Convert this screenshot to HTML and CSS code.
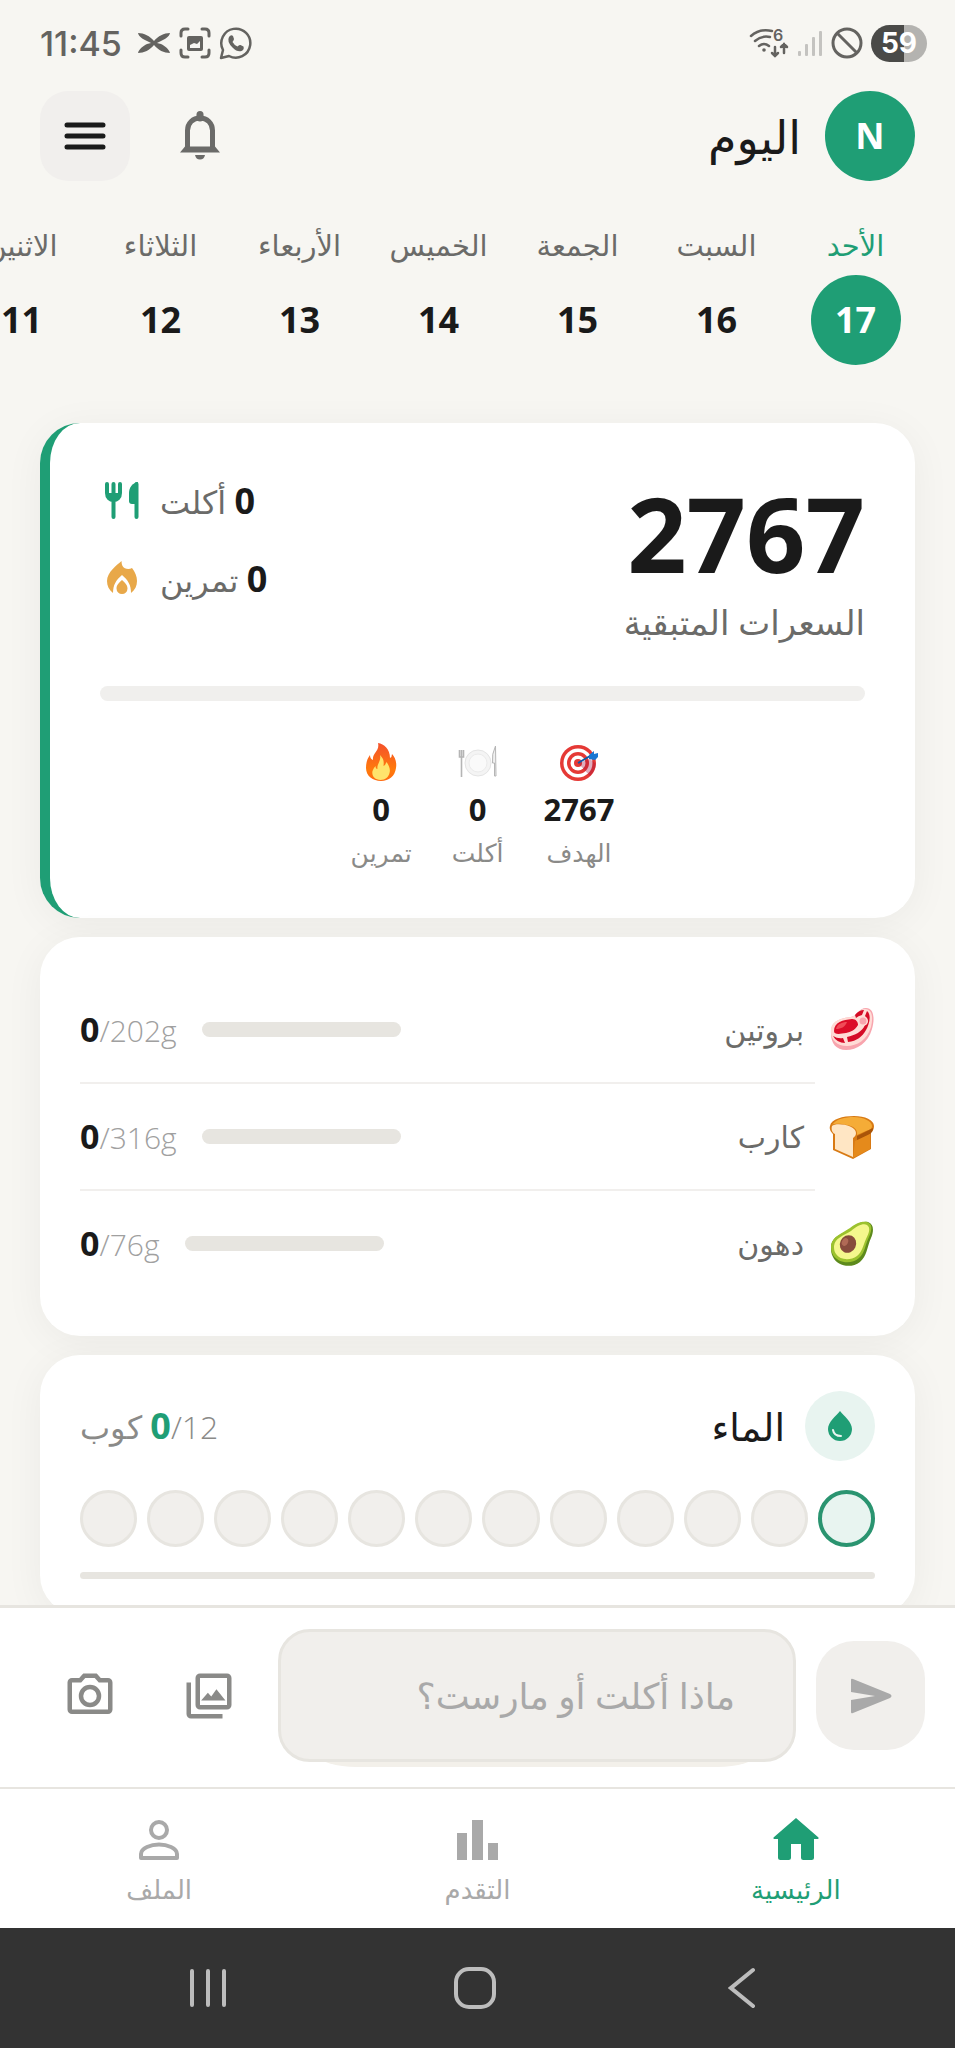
FILE: index.html
```html
<!DOCTYPE html>
<html lang="ar" dir="rtl">
<head>
  <meta charset="UTF-8">
  <meta name="viewport" content="width=device-width, initial-scale=1.0">
  <title>اليوم</title>
  <link rel="stylesheet" href="styles.css">
</head>
<body>
  <div class="status-bar" dir="ltr">
    <div class="status-left">
      <span class="clock">11:45</span>
      <svg width="34" height="34" viewBox="0 0 34 34" fill="#646360"><path d="M1 7c6 0 12 3 16 8 4-5 10-8 16-8-1 4-5 6-9 8l-4 2 4 1c4 2 8 5 9 9-6 0-12-3-16-8-4 5-10 8-16 8 1-4 5-7 9-9l4-1-4-2C6 13 2 11 1 7z"/></svg>
      <svg width="32" height="32" viewBox="0 0 32 32" fill="none" stroke="#646360" stroke-width="3" stroke-linecap="round"><path d="M2 9V6q0-4 4-4h3M23 2h3q4 0 4 4v3M30 23v3q0 4-4 4h-3M9 30H6q-4 0-4-4v-3"/><rect x="8" y="9" width="16" height="15" rx="2" fill="#646360" stroke="none"/><path d="M11 21v-3l4-2 3 1 3-3v7z" fill="#f7f6f2" stroke="none"/></svg>
      <svg width="34" height="34" viewBox="0 0 34 34"><path d="M2 32l2-8A14.500 14.500 0 1 1 10 30z" fill="none" stroke="#646360" stroke-width="2.500" stroke-linejoin="round"/><path d="M10 11q2-3 4-1l1 3q0 1-1.500 3 2 3.500 5 4.500 1.500-2 3-1.500l3 1.500q1 3-2 4.500-4 1.500-9-3.500-6-6-3.500-10.500z" fill="#646360"/></svg>
    </div>
    <div class="status-right">
      <svg width="40" height="36" viewBox="0 -2 40 36" fill="none" stroke="#646360" stroke-width="2.500" stroke-linecap="round"><path d="M2 9Q11 1 23 4M6 14q7-6 15-4M10 19q5-4 10 0"/><circle cx="15" cy="23" r="1.800" fill="#646360" stroke="none"/><path d="M26 20v9m-3-3l3 3 3-3M35 26v-9m-3 3l3-3 3 3"/><text x="24" y="14" class="wifi-gen">6</text></svg>
      <svg width="26" height="28" viewBox="0 0 26 28" fill="#c4c3c0"><rect x="1" y="22" width="3" height="5" rx="1"/><rect x="8" y="15" width="3" height="12" rx="1"/><rect x="15" y="8" width="3" height="19" rx="1"/><rect x="22" y="2" width="3" height="25" rx="1"/></svg>
      <svg width="32" height="32" viewBox="0 0 32 32" fill="none" stroke="#646360" stroke-width="3"><circle cx="16" cy="16" r="14"/><path d="M6 6l20 20"/></svg>
      <span class="battery">59</span>
    </div>
  </div>

  <header class="header">
    <div class="avatar">N</div>
    <h1>اليوم</h1>
    <button class="bell" aria-label="الإشعارات">
      <svg width="42" height="50" viewBox="0 0 42 50" fill="none" stroke="#6b6b69" stroke-width="5"><path d="M8.500 39V19.500C8.500 12 14 7 21 7s12.500 5 12.500 12.500V39" /><path d="M1 41.500l5-6h30l5 6z" fill="#6b6b69" stroke="none"/><path d="M21 3.500V7" stroke-width="7" stroke-linecap="round"/><path d="M16 44h10q-1 4.500-5 4.500T16 44z" fill="#6b6b69" stroke="none"/></svg>
    </button>
    <button class="menu" aria-label="القائمة">
      <svg width="42" height="30" viewBox="0 0 42 30" stroke="#1a1a1a" stroke-width="5" stroke-linecap="round"><path d="M3 4h36M3 15h36M3 26h36"/></svg>
    </button>
  </header>

  <nav class="days">
    <button class="day active"><span class="day-name">الأحد</span><span class="day-number">17</span></button>
    <button class="day"><span class="day-name">السبت</span><span class="day-number">16</span></button>
    <button class="day"><span class="day-name">الجمعة</span><span class="day-number">15</span></button>
    <button class="day"><span class="day-name">الخميس</span><span class="day-number">14</span></button>
    <button class="day"><span class="day-name">الأربعاء</span><span class="day-number">13</span></button>
    <button class="day"><span class="day-name">الثلاثاء</span><span class="day-number">12</span></button>
    <button class="day"><span class="day-name">الاثنين</span><span class="day-number">11</span></button>
  </nav>

  <main class="content">
    <section class="card calories">
      <div class="calories-top">
        <div>
          <div class="calories-value">2767</div>
          <div class="calories-label">السعرات المتبقية</div>
        </div>
        <div class="summary">
          <div class="summary-row">
            <span><b>0</b> أكلت</span>
            <svg width="44" height="44" viewBox="-4 -3 44 44" fill="none" stroke="#1f9e75" stroke-width="4" stroke-linecap="round"><path d="M3 2v9c0 5 3 7 6.500 7S16 16 16 11V2M9.500 2v33M32.500 2v33"/><path d="M4 11h11l-1 6H6z" fill="#1f9e75" stroke="none"/><path d="M34 0c-6 1-9 6-9 11v8q0 3 3 3h6z" fill="#1f9e75" stroke="none"/></svg>
          </div>
          <div class="summary-row">
            <span><b>0</b> تمرين</span>
            <svg width="44" height="44" viewBox="-7 -4 44 44" fill="#e8a849"><path d="M14.500 0C10 4 0 11 0 20c0 5 2 9 6 12 0-8 3-13 9-18 6 5 9 10 9 18 4-3 6-7 6-12 0-5-2-9-5-13-3 2-8 1-9.500-2Q14.500 3 14.500 0z"/><path d="M15 19c-3 3-5.500 5-5.500 8.500a5.500 5.500 0 0 0 11 0C20.500 24 18 22 15 19z"/></svg>
          </div>
        </div>
      </div>
      <div class="progress"></div>
      <div class="stats">
        <div class="stat">
          <svg width="40" height="40" viewBox="0 0 40 40"><circle cx="19" cy="21" r="18" fill="#e53935"/><circle cx="19" cy="21" r="14.500" fill="#fff"/><circle cx="19" cy="21" r="11" fill="#e53935"/><circle cx="19" cy="21" r="7.500" fill="#fff"/><circle cx="19" cy="21" r="4" fill="#e53935"/><path d="M19 21l12 13q5-5 6-12l-6-5z" fill="#a01040" opacity=".35"/><path d="M19 21l12-7" stroke="#0d5aa7" stroke-width="2"/><path d="M30 13l5-4v3l4-1v4l-3 3-6-1z" fill="#1976d2"/></svg>
          <b>2767</b>
          <span>الهدف</span>
        </div>
        <div class="stat">
          <svg width="40" height="40" viewBox="0 0 40 40" fill="none"><circle cx="20" cy="21" r="13" fill="#f4f4f4" stroke="#e4e4e4"/><circle cx="20" cy="21" r="9" fill="#fafafa" stroke="#ebebeb"/><path d="M1.500 8v7h4V8M3.500 8v27" stroke="#b5b5b5" stroke-width="1.600"/><path d="M37.500 4q-4 8-3 17h2v13h1.500z" fill="#f0f0f0" stroke="#b5b5b5"/></svg>
          <b>0</b>
          <span>أكلت</span>
        </div>
        <div class="stat">
          <svg width="40" height="40" viewBox="-5 0 40 40"><defs><linearGradient id="fire" x1="0" y1="0" x2="0" y2="1"><stop offset="0" stop-color="#f4512c"/><stop offset=".7" stop-color="#ff7a0c"/><stop offset="1" stop-color="#ff6a10"/></linearGradient></defs><path d="M12 1c6 1 12 6 12 15q2-1 2-4c3 3 5 8 4 14-1 8-7 13-15 13S0 34 0 26c0-5 1-9 4-13q0 4 3 5C6 11 14 9 12 1z" fill="url(#fire)"/><path d="M14 13c4 4 4 7 3.500 11q2-1 3-4c3 4 4 8 3 11-1 4-4 7-9 7-6 0-9-4-8-9q1-3 3-5 0 3 2 3c-1-5 4-8 2.500-14z" fill="#ffe36c"/></svg>
          <b>0</b>
          <span>تمرين</span>
        </div>
      </div>
    </section>

    <section class="card macros">
      <div class="macro">
        <svg width="46" height="46" viewBox="0 0 46 46"><path d="M2 27C1 14 12 11 22 10c6-1 8-9 15-9 8 0 9 11 6 21-4 14-15 21-26 21C7 43 2 36 2 27z" fill="#f8a5ae"/><path d="M2 25C1 14 12 11 22 10c6-1 8-8 14-8 8 0 8 10 6 18-4 13-14 19-24 19C8 39 2 33 2 25z" fill="#ffdcd6"/><path d="M5 24c0-9 9-11 18-12 4 0 6 3 6 6-3 5-7 7-12 8-6 1-12 2-12-2z" fill="#dc0d28"/><path d="M7 22c1-5 6-7 11-7-2 5-6 7-11 7z" fill="#f04b57"/><path d="M26 8q4-5 9-5l-2 5q-4 1-6 3zM38 4c5 4 2 14-1 19-4 7-9 11-18 12l-1-5c8-2 15-5 18-12 2-1 3-3 2-5l-2-4zM4 29q5 3 10 2l2 5Q8 36 4 29z" fill="#d50b26"/><circle cx="34" cy="14" r="5" fill="#ffdcd6"/><circle cx="34" cy="14" r="3.500" fill="#f8a5ae"/></svg>
        <span class="macro-name">بروتين</span>
        <span class="macro-bar"></span>
        <span class="macro-value" dir="ltr"><b>0</b>/202g</span>
      </div>
      <hr>
      <div class="macro">
        <svg width="46" height="46" viewBox="0 0 46 46"><path d="M1 12C2 5 14 2 25 2c11 0 20 4 20 10 0 3-1 5-3 6v17L24 45 4 36V20C2 18 0 15 1 12z" fill="#d87a14"/><path d="M3 11C7 5 16 3 25 3s18 4 18 9c0 3-3 4-6 5l-9 4c1-6-4-9-10-10S7 9 3 11z" fill="#f5ac37"/><path d="M28 22l16-8c0 3-1 4-3 6l-13 7z" fill="#a95408"/><path d="M26 27l15-7v15L24 44z" fill="#e58a1b"/><path d="M3 12c4-4 24-1 24 7 0 3-2 4-3 5v19L6 35V20c-3-1-4-5-3-8z" fill="#ffe6c4"/></svg>
        <span class="macro-name">كارب</span>
        <span class="macro-bar"></span>
        <span class="macro-value" dir="ltr"><b>0</b>/316g</span>
      </div>
      <hr>
      <div class="macro">
        <svg width="46" height="46" viewBox="0 0 46 46"><path d="M2 26C3 15 12 14 21 8c5-4 11-8 18-7 6 2 6 9 3 16-4 9-4 18-11 24-9 7-23 4-27-5-2-3-2-7-2-10z" fill="#5d8a1c"/><path d="M2 24C4 15 12 13 21 7c5-4 11-7 17-6 6 2 5 8 2 15-4 8-4 16-10 21-8 7-21 5-26-3-2-3-2-7-2-10z" fill="#9cc22e"/><path d="M5 25c1-8 9-10 17-15C28 5 34 2 38 4c4 3 2 8-1 14-3 7-4 13-9 17-7 5-17 4-21-2-2-3-2-5-2-8z" fill="#f4f78d"/><ellipse cx="19" cy="23" rx="8" ry="9" transform="rotate(25 19 23)" fill="#874b3c"/><ellipse cx="16" cy="21" rx="3" ry="4" transform="rotate(25 16 21)" fill="#b06a56"/></svg>
        <span class="macro-name">دهون</span>
        <span class="macro-bar"></span>
        <span class="macro-value" dir="ltr"><b>0</b>/76g</span>
      </div>
    </section>

    <section class="card water">
      <div class="water-head">
        <span class="water-icon"><svg width="24" height="30" viewBox="0 0 24 30"><path d="M12 0C8 5 0 11 0 18a12 12 0 0 0 24 0C24 11 16 5 12 0z" fill="#1f9e75"/><path d="M5 19q1 6 8 6" fill="none" stroke="#e8f4f0" stroke-width="2" stroke-linecap="round"/></svg></span>
        <h2>الماء</h2>
        <span class="water-count"><b>0</b>/12 كوب</span>
      </div>
      <div class="cups">
        <button class="cup next" aria-label="1"></button>
        <button class="cup" aria-label="2"></button>
        <button class="cup" aria-label="3"></button>
        <button class="cup" aria-label="4"></button>
        <button class="cup" aria-label="5"></button>
        <button class="cup" aria-label="6"></button>
        <button class="cup" aria-label="7"></button>
        <button class="cup" aria-label="8"></button>
        <button class="cup" aria-label="9"></button>
        <button class="cup" aria-label="10"></button>
        <button class="cup" aria-label="11"></button>
        <button class="cup" aria-label="12"></button>
      </div>
      <div class="water-bar"></div>
    </section>
  </main>

  <form class="composer">
    <button type="button" class="send" aria-label="إرسال">
      <svg width="42" height="36" viewBox="0 0 42 36" fill="#a9a9a9"><path d="M1 2q0-2 2-1l37 15q3 2 0 4L3 35q-2 1-2-1V22l24-4L1 14z"/></svg>
    </button>
    <div class="field">
      <input type="text" aria-label="ماذا أكلت أو مارست؟" placeholder="ماذا أكلت أو مارست؟">
    </div>
    <button type="button" class="tool" aria-label="الصور">
      <svg width="54" height="54" viewBox="0 0 24 24" fill="#8a8a88"><path d="M20 4v12H8V4h12m0-2H8a2 2 0 0 0-2 2v12a2 2 0 0 0 2 2h12a2 2 0 0 0 2-2V4a2 2 0 0 0-2-2zM8.500 14l3-3.500 1.500 1.700L15.300 9l4 5zM2 6v14a2 2 0 0 0 2 2h14v-2H4V6z"/></svg>
    </button>
    <button type="button" class="tool" aria-label="الكاميرا">
      <svg width="54" height="54" viewBox="0 0 24 24" fill="#8a8a88"><path d="M14.100 4l1.800 2H20v12H4V6h4.100l1.800-2h4.200M15 2H9L7.200 4H4a2 2 0 0 0-2 2v12a2 2 0 0 0 2 2h16a2 2 0 0 0 2-2V6a2 2 0 0 0-2-2h-3.200zm-3 7a3 3 0 1 1 0 6 3 3 0 0 1 0-6m0-2a5 5 0 1 0 0 10 5 5 0 0 0 0-10z"/></svg>
    </button>
  </form>

  <nav class="tabs">
    <a href="#" class="tab active">
      <svg width="46" height="42" viewBox="0 0 46 42" fill="currentColor"><path d="M23 0l22.500 19.500q.5 1.500-1 1.500H41v18.500q0 2.500-2.500 2.500h-8q-2.500 0-2.500-2.500V26H18v13.500q0 2.500-2.500 2.500h-8Q5 42 5 39.500V21H1.500q-1.500 0-1-1.500z"/></svg>
      <span>الرئيسية</span>
    </a>
    <a href="#" class="tab">
      <svg width="42" height="42" viewBox="0 0 42 42" fill="currentColor"><path d="M0 15h10v27H0zM15 2h11v40H15zM31 25h10v17H31z"/></svg>
      <span>التقدم</span>
    </a>
    <a href="#" class="tab">
      <svg width="42" height="42" viewBox="0 0 42 42" fill="none" stroke="currentColor" stroke-width="4" stroke-linejoin="round"><circle cx="21" cy="12" r="8"/><path d="M3 40h36v-4c0-6-10-9.500-18-9.500S3 30 3 36z"/></svg>
      <span>الملف</span>
    </a>
  </nav>

  <div class="system-nav" dir="ltr">
    <button aria-label="Recents"><svg width="38" height="40" viewBox="0 0 38 40" stroke="#bdbdbd" stroke-width="4" stroke-linecap="round"><path d="M3 3v34M19 3v34M35 3v34"/></svg></button>
    <button aria-label="Home"><svg width="42" height="42" viewBox="0 0 42 42" fill="none" stroke="#bdbdbd" stroke-width="4"><rect x="2" y="2" width="38" height="38" rx="13"/></svg></button>
    <button aria-label="Back"><svg width="28" height="42" viewBox="0 0 28 42" fill="none" stroke="#bdbdbd" stroke-width="4" stroke-linecap="round"><path d="M25 3L3 21l22 18"/></svg></button>
  </div>
</body>
</html>
```
FILE: styles.css
```css
* {
  box-sizing: border-box;
}
body {
  font-family: "Open Sans", "DejaVu Sans", sans-serif;
  margin: 0;
  height: 100vh;
  display: flex;
  flex-direction: column;
  overflow: hidden;
  background-color: #f7f6f2;
  color: #1a1a1a;
}
button {
  font-family: inherit;
  color: inherit;
  background: none;
  border: none;
  padding: 0;
  cursor: pointer;
  display: flex;
  justify-content: center;
  align-items: center;
}
svg {
  display: block;
  flex-shrink: 0;
}
h1, h2 {
  margin: 0;
  font-weight: 400;
}
b {
  color: #1a1a1a;
  font-weight: 700;
}

/* phone status bar */
.status-bar {
  display: flex;
  justify-content: space-between;
  align-items: center;
  height: 86px;
  padding: 0 28px 0 40px;
  flex-shrink: 0;
}
.status-left,
.status-right {
  display: flex;
  align-items: center;
  gap: 8px;
}
.clock {
  font-family: Inter, sans-serif;
  font-size: 34px;
  font-weight: 500;
  color: #646360;
  margin-right: 7px;
}
.wifi-gen {
  font-family: Inter, sans-serif;
  font-size: 16px;
  font-weight: 600;
  fill: #646360;
  stroke: none;
}
.battery {
  font-family: Inter, sans-serif;
  font-size: 28px;
  font-weight: 700;
  line-height: 37px;
  width: 56px;
  text-align: center;
  color: #fff;
  border-radius: 19px;
  background: linear-gradient(to right, #4a4a48 59%, #b4b3b0 59%);
}

.header {
  display: flex;
  align-items: center;
  height: 100px;
  padding: 0 40px;
  flex-shrink: 0;
}
.avatar {
  width: 90px;
  height: 90px;
  border-radius: 50%;
  background-color: #1f9e75;
  color: #fff;
  font-size: 36px;
  font-weight: 700;
  line-height: 90px;
  text-align: center;
}
.header h1 {
  font-size: 46px;
  line-height: 90px;
  margin-right: 24px;
}
.bell {
  width: 90px;
  height: 90px;
  margin-right: auto;
  margin-left: 25px;
}
.menu {
  width: 90px;
  height: 90px;
  border-radius: 28px;
  background-color: #f1efed;
}

.days {
  display: flex;
  gap: 20px;
  padding: 34px 40px 58px;
  overflow: hidden;
  flex-shrink: 0;
}
.day {
  width: 119px;
  flex-shrink: 0;
  flex-direction: column;
  gap: 5px;
}
.day-name {
  font-size: 29px;
  line-height: 50px;
  color: #6b6b69;
  white-space: nowrap;
}
.day-number {
  width: 90px;
  height: 90px;
  border-radius: 50%;
  font-size: 36px;
  font-weight: 700;
  line-height: 90px;
}
.day.active .day-name {
  color: #1f9e75;
}
.day.active .day-number {
  background-color: #1f9e75;
  color: #fff;
}

.content {
  flex: 1;
  min-height: 0;
  display: flex;
  flex-direction: column;
  gap: 19px;
  padding: 0 40px;
}
.card {
  background-color: #fff;
  border-radius: 40px;
  box-shadow: 0 6px 40px rgba(0, 0, 0, 0.05);
  flex-shrink: 0;
}

.calories {
  border-left: 10px solid #1f9e75;
  padding: 50px;
}
.calories-top {
  display: flex;
  justify-content: space-between;
}
.calories-value {
  font-size: 104px;
  font-weight: 700;
  line-height: 120px;
}
.calories-label {
  font-size: 34px;
  line-height: 58px;
  color: #6b6b69;
}
.summary {
  display: flex;
  flex-direction: column;
  gap: 22px;
}
.summary-row {
  display: flex;
  justify-content: flex-end;
  align-items: center;
  gap: 16px;
  height: 56px;
  font-size: 32px;
  line-height: 56px;
  color: #6b6b69;
}
.summary-row b {
  font-size: 36px;
}
.progress {
  height: 15px;
  margin-top: 35px;
  border-radius: 8px;
  background-color: #f0efed;
}
.stats {
  display: flex;
  justify-content: center;
  gap: 40px;
  margin-top: 41px;
}
.stat {
  display: flex;
  flex-direction: column;
  align-items: center;
}
.stat b {
  font-size: 31px;
  line-height: 54px;
}
.stat span {
  font-size: 25px;
  line-height: 32px;
  color: #8a8a88;
}

.macros {
  padding: 40px;
}
.macro {
  display: flex;
  align-items: center;
  height: 105px;
}
.macro-name {
  font-size: 30px;
  line-height: 40px;
  color: #6b6b69;
  margin-right: 25px;
}
.macro-bar {
  width: 199px;
  height: 15px;
  border-radius: 8px;
  background-color: #e7e5e0;
  margin-right: auto;
  margin-left: 25px;
}
.macro-value {
  font-size: 30px;
  font-weight: 300;
  line-height: 40px;
  color: #a0a0a0;
}
.macro-value b {
  font-size: 34px;
}
.macros hr {
  width: auto;
  height: 2px;
  margin: 0 60px 0 0;
  border: none;
  background-color: #f1efed;
}

.water {
  padding: 36px 40px;
}
.water-head {
  display: flex;
  align-items: center;
}
.water-icon {
  width: 70px;
  height: 70px;
  border-radius: 50%;
  background-color: #e8f4f0;
  display: flex;
  justify-content: center;
  align-items: center;
}
.water h2 {
  font-size: 38px;
  line-height: 50px;
  margin-right: 20px;
}
.water-count {
  margin-right: auto;
  font-size: 32px;
  font-weight: 300;
  line-height: 50px;
  color: #8a8a88;
}
.water-count b {
  font-size: 36px;
  color: #1f9e75;
}
.cups {
  display: grid;
  grid-template-columns: repeat(12, 1fr);
  gap: 10px;
  margin-top: 29px;
}
.cup {
  aspect-ratio: 1;
  border: 3px solid #e7e5e0;
  border-radius: 50%;
  background-color: #f1efec;
}
.cup.next {
  border: 4px solid #2a9470;
  background-color: #e8f4f0;
}
.water-bar {
  height: 7px;
  margin-top: 25px;
  border-radius: 4px;
  background-color: #e7e5e0;
}

/* message box */
.composer {
  display: flex;
  align-items: center;
  gap: 20px;
  padding: 21px 30px 25px 40px;
  background-color: #fff;
  border-top: 3px solid #e7e5e0;
  flex-shrink: 0;
}
.send {
  width: 109px;
  height: 109px;
  border-radius: 38px;
  background-color: #f1efec;
}
.field {
  position: relative;
  flex: 1;
  min-width: 0;
}
.field::before {
  content: "";
  position: absolute;
  left: 8px;
  right: 8px;
  bottom: -5px;
  height: 100px;
  border-radius: 70px / 50px;
  background-color: #f3f0ea;
}
.field input {
  position: relative;
  display: block;
  width: 100%;
  height: 133px;
  padding: 0 58px;
  border: 3px solid #e7e5e0;
  border-radius: 32px;
  background-color: #f1efec;
  font-family: inherit;
  font-size: 36px;
  color: #1a1a1a;
}
.field input::placeholder {
  color: #a9a9a9;
  opacity: 1;
}
.tool {
  width: 99px;
  height: 99px;
}

.tabs {
  display: flex;
  height: 141px;
  background-color: #fff;
  border-top: 2px solid #e7e5e0;
  flex-shrink: 0;
}
.tab {
  flex: 1;
  display: flex;
  flex-direction: column;
  align-items: center;
  padding-top: 29px;
  gap: 7px;
  font-size: 26px;
  line-height: 44px;
  color: #a9a9a9;
  text-decoration: none;
}
.tab.active {
  color: #1f9e75;
}

.system-nav {
  display: flex;
  height: 120px;
  padding: 0 80px 0 74px;
  background-color: #333;
  flex-shrink: 0;
}
.system-nav button {
  flex: 1;
}
```
